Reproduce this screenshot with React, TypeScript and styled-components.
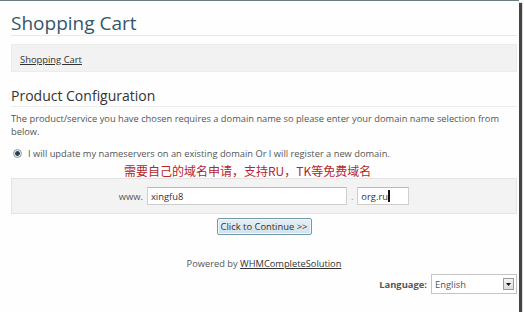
import React from "react";
import styled, { createGlobalStyle } from "styled-components";

const Global = createGlobalStyle`
  html, body { margin: 0; padding: 0; background: #ffffff; }
  body { font-family: "Open Sans", "Noto Sans", sans-serif; }
  * { box-sizing: border-box; }
`;

const Frame = styled.div`
  width: 519px;
  height: 312px;
  background: #fefefe;
  border-top: 1px solid #6c7d84;
  box-shadow: 3px 3px 1px rgba(35, 35, 35, 0.85);
  padding: 0 2px 0 11px;
  display: flex;
  flex-direction: column;
  font-family: "Open Sans", "Noto Sans", sans-serif;
  color: #555;
`;

const Title = styled.h1`
  margin: 10px 0 0;
  font-size: 19px;
  line-height: 24px;
  font-weight: 400;
  color: #35566a;
  border-bottom: 1px solid #e8e8e8;
`;

const Breadcrumb = styled.div`
  margin-top: 8px;
  height: 28px;
  display: flex;
  align-items: center;
  padding: 2px 0 0 8px;
  background: #f2f2f2;
  border: 1px solid #ececec;
`;

const CrumbLink = styled.a`
  font-size: 9.4px;
  color: #333;
  text-decoration: underline;
`;

const Section = styled.h2`
  margin: 14px 0 0;
  padding-bottom: 1px;
  font-size: 14px;
  line-height: 19px;
  font-weight: 400;
  color: #333;
  border-bottom: 1px solid #ececec;
`;

const Para = styled.p`
  margin: 5px 0 0;
  font-size: 9.3px;
  line-height: 13px;
  color: #555;
`;

const RadioRow = styled.label`
  margin-top: 9px;
  display: flex;
  align-items: center;
  gap: 6px;
  padding-left: 2px;
  font-size: 9.3px;
  line-height: 13px;
  color: #555;
`;

const Radio = styled.input`
  appearance: none;
  margin: 0;
  width: 9px;
  height: 9px;
  border-radius: 50%;
  border: 1px solid #8a9aa8;
  background: radial-gradient(circle, #2c3e50 0 2px, #dfe8ef 2.6px);
`;

const Note = styled.div`
  margin-top: 4px;
  padding-left: 113px;
  font-family: "Noto Sans CJK SC", sans-serif;
  font-size: 12px;
  line-height: 14px;
  color: #b3262c;
`;

const DomainBox = styled.div`
  height: 36px;
  display: flex;
  align-items: center;
  justify-content: center;
  background: #f3f3f3;
  border: 1px solid #e4e4e4;
  font-size: 9.4px;
  color: #555;
`;

const Prefix = styled.span`
  margin-right: 4px;
`;

const Dot = styled.span`
  margin: 0 4px;
  color: #999;
`;

const FieldWrap = styled.span`
  position: relative;
  display: inline-flex;
`;

const TextField = styled.input<{ $w: number }>`
  width: ${(p) => p.$w}px;
  height: 18px;
  padding: 0 3px;
  border: 1px solid #cfcfcf;
  border-top-color: #b9b9b9;
  background: #fff;
  font-family: "Open Sans", sans-serif;
  font-size: 9.4px;
  color: #333;
  outline: none;
`;

const Caret = styled.span`
  position: absolute;
  left: 31px;
  top: 3px;
  width: 1.5px;
  height: 12px;
  background: #111;
`;

const ButtonRow = styled.div`
  margin-top: 4px;
  display: flex;
  justify-content: center;
`;

const ContinueButton = styled.button`
  width: 95px;
  height: 17px;
  padding: 0;
  border: 1px solid #6f9ab0;
  border-radius: 2px;
  background: linear-gradient(#e6eff4, #d2e2ea);
  box-shadow: inset 0 0 0 1px #f3f8fa;
  font-family: "Open Sans", sans-serif;
  font-size: 9.4px;
  color: #333;
`;

const Powered = styled.div`
  margin-top: 22px;
  text-align: center;
  font-size: 9.3px;
  line-height: 13px;
  color: #555;
  a { color: #333; text-decoration: underline; }
`;

const LangRow = styled.div`
  margin-top: 4px;
  display: flex;
  justify-content: flex-end;
  align-items: center;
  gap: 4px;
`;

const LangLabel = styled.span`
  font-size: 9.4px;
  font-weight: 700;
  color: #555;
`;

const SelectWrap = styled.span`
  position: relative;
  display: inline-flex;
`;

const LangSelect = styled.select`
  appearance: none;
  width: 86px;
  height: 20px;
  padding: 0 0 0 3px;
  border: 1px solid #c4c4c4;
  background: #fff;
  font-family: "Open Sans", sans-serif;
  font-size: 9.4px;
  color: #555;
  outline: none;
`;

const ArrowBox = styled.span`
  position: absolute;
  right: 3px;
  top: 4px;
  width: 11px;
  height: 12px;
  border: 1px solid #9a9a9a;
  background: linear-gradient(#f4f4f4, #dcdcdc);
  display: flex;
  align-items: center;
  justify-content: center;
  pointer-events: none;
`;

export default function App() {
  return (
    <>
      <Global />
      <Frame>
        <Title>Shopping Cart</Title>
        <Breadcrumb>
          <CrumbLink href="#">Shopping Cart</CrumbLink>
        </Breadcrumb>
        <Section>Product Configuration</Section>
        <Para>
          The product/service you have chosen requires a domain name so please enter your domain name selection from below.
        </Para>
        <RadioRow>
          <Radio type="radio" defaultChecked name="domain" />
          I will update my nameservers on an existing domain Or I will register a new domain.
        </RadioRow>
        <Note>需要自己的域名申请，支持RU，TK等免费域名</Note>
        <DomainBox>
          <Prefix>www.</Prefix>
          <TextField $w={200} defaultValue="xingfu8" />
          <Dot>.</Dot>
          <FieldWrap>
            <TextField $w={52} defaultValue="org.ru" />
            <Caret />
          </FieldWrap>
        </DomainBox>
        <ButtonRow>
          <ContinueButton>Click to Continue &gt;&gt;</ContinueButton>
        </ButtonRow>
        <Powered>
          Powered by <a href="#">WHMCompleteSolution</a>
        </Powered>
        <LangRow>
          <LangLabel>Language:</LangLabel>
          <SelectWrap>
            <LangSelect defaultValue="English">
              <option>English</option>
            </LangSelect>
            <ArrowBox>
              <svg width="5" height="3" viewBox="0 0 5 3">
                <path d="M0 0h5L2.5 3z" fill="#111" />
              </svg>
            </ArrowBox>
          </SelectWrap>
        </LangRow>
      </Frame>
    </>
  );
}
